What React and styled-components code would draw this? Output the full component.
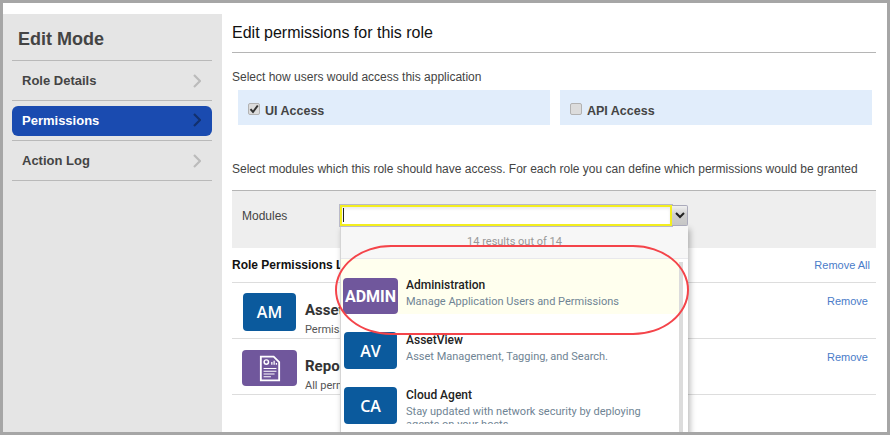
import React from "react";
import styled, { createGlobalStyle } from "styled-components";

const Global = createGlobalStyle`
  html, body { margin: 0; padding: 0; background: #fff; }
  body { font-family: "Liberation Sans", Arial, sans-serif; }
  * { box-sizing: border-box; }
`;

const Frame = styled.div`
  position: relative;
  width: 890px;
  height: 435px;
  border: 3px solid #a6a6a6;
  background: #fff;
  display: flex;
  overflow: hidden;
`;

const Sidebar = styled.aside`
  width: 219px;
  margin-top: 11px;
  padding: 0 10px 0 9px;
  background: #e5e5e5;
  flex: none;
`;

const SideTitle = styled.h2`
  margin: 0;
  height: 47px;
  padding: 15px 0 0 6px;
  font-size: 18px;
  line-height: 20px;
  font-weight: 700;
  color: #444;
  border-bottom: 1px solid #b9b9b9;
`;

const SideRow = styled.div`
  height: 40px;
  padding: ${(p) => (p.$active ? "5px 0 4px" : "0")};
  border-bottom: 1px solid #b9b9b9;
`;

const SideLink = styled.div`
  height: 100%;
  display: flex;
  align-items: center;
  justify-content: space-between;
  padding: ${(p) => (p.$active ? "0 11px 2px 10px" : "0 11px 0 10px")};
  border-radius: 6px;
  font-size: 13px;
  font-weight: 700;
  color: ${(p) => (p.$active ? "#fff" : "#444")};
  background: ${(p) => (p.$active ? "#1a4bb0" : "transparent")};
`;

const Chevron = styled.svg`
  width: 8px;
  height: 14px;
  fill: none;
  stroke-width: 2.2;
  stroke: ${(p) => (p.$active ? "#12306e" : "#bbb")};
`;

const Main = styled.main`
  flex: 1;
  min-width: 0;
  padding: 0 11px 0 10px;
`;

const Heading = styled.h1`
  margin: 0;
  height: 50px;
  padding-top: 20px;
  font-size: 16px;
  line-height: 19px;
  font-weight: 400;
  color: #111;
  border-bottom: 1px solid #b5b5b5;
`;

const Hint = styled.p`
  margin: ${(p) => p.$margin};
  font-size: 12px;
  line-height: 14px;
  color: #444;
`;

const AccessRow = styled.div`
  display: flex;
  gap: 10px;
  margin: 6px 4px 0 6px;
`;

const AccessCard = styled.label`
  flex: 1;
  height: 35px;
  display: flex;
  align-items: center;
  gap: 5px;
  padding: 7px 0 0 10px;
  background: #e1edfb;
  font-size: 12.5px;
  font-weight: 700;
  color: #444;
`;

const Check = styled.span`
  width: 12px;
  height: 12px;
  margin-top: -5px;
  display: flex;
  align-items: center;
  justify-content: center;
  border: 1px solid #b2b2b2;
  border-radius: 2px;
  background: #dcdcdc;
`;

const ModulesBar = styled.div`
  height: 58px;
  margin-top: 14px;
  padding: 16px 0 0 10px;
  background: #eee;
  border-top: 1px solid #b5b5b5;
  font-size: 12px;
  line-height: 19px;
  color: #444;
`;

const ListHeader = styled.div`
  height: 35px;
  display: flex;
  align-items: center;
  justify-content: space-between;
  padding: 0 6px 1px 0;
  border-bottom: 1px solid #ddd;
  font-size: 12px;
  font-weight: 700;
  color: #111;
`;

const RemoveLink = styled.a`
  font-size: 11px;
  font-weight: 400;
  color: #4a7cc9;
`;

const RoleRow = styled.div`
  height: 56px;
  display: flex;
  padding: ${(p) => p.$pad};
  border-bottom: 1px solid #ddd;
`;

const Tile = styled.div`
  flex: none;
  width: ${(p) => p.$w || 53}px;
  height: ${(p) => p.$h || 37}px;
  display: flex;
  align-items: center;
  justify-content: center;
  border-radius: 4px;
  background: ${(p) => (p.$purple ? "#70579c" : "#0b5a9d")};
  color: #fff;
  font-family: ${(p) => (p.$badge ? '"Roboto"' : '"Open Sans"')}, sans-serif;
  font-size: 16px;
  font-weight: ${(p) => (p.$badge ? 700 : 600)};
`;

const RoleText = styled.div`
  flex: 1;
  padding: ${(p) => p.$pad};
  margin-left: ${(p) => p.$left}px;
  font-family: "Roboto", sans-serif;
`;

const RoleName = styled.div`
  font-size: 15px;
  line-height: 18px;
  font-weight: 700;
  color: #333;
`;

const RoleSub = styled.div`
  margin-top: 4px;
  font-size: 11px;
  line-height: 13px;
  color: #555;
`;

const RoleRemove = styled(RemoveLink)`
  margin: 0 8px 0 0;
  padding-top: ${(p) => p.$top}px;
`;

const Dropdown = styled.div`
  position: absolute;
  left: 337px;
  top: 202px;
  width: 348px;
  height: 230px;
  font-family: "Roboto", sans-serif;
`;

const InputRow = styled.div`
  height: 21px;
  display: flex;
`;

const SearchBox = styled.div`
  width: 332px;
  padding: 1px 0 0 1px;
  border: 2px solid #f3ee1f;
  outline: 1px solid #b9b9c9;
  background: #fff;
  box-shadow: inset 0 2px 3px rgba(0, 0, 0, 0.08);
`;

const Caret = styled.span`
  display: block;
  width: 1px;
  height: 14px;
  background: #222;
`;

const ToggleButton = styled.div`
  width: 16px;
  display: flex;
  align-items: center;
  justify-content: center;
  background: linear-gradient(#f0f0f0, #cfcfcf 45%, #c6c6c6);
  border: 1px solid #aab;
  border-left: none;
  border-radius: 0 2px 2px 0;
`;

const Panel = styled.div`
  width: 348px;
  height: 209px;
  background: #fff;
  border-left: 1px solid #d5d5d5;
  box-shadow: 2px 3px 6px rgba(0, 0, 0, 0.28);
`;

const ResultsCount = styled.div`
  height: 33px;
  padding-top: 9px;
  text-align: center;
  font-size: 11px;
  line-height: 14px;
  color: #999;
  background: #f7f7f7;
  border-bottom: 1px solid #e8e8ec;
`;

const ScrollArea = styled.div`
  display: flex;
  height: 176px;
  padding-right: 5px;
`;

const Options = styled.div`
  flex: 1;
  min-width: 0;
  height: 165px;
  overflow: hidden;
`;

const Track = styled.div`
  width: 4px;
  margin-top: 3px;
  background: #dcdcdc;
`;

const Option = styled.div`
  height: 55px;
  display: flex;
  padding: ${(p) => p.$pad};
  background: ${(p) => (p.$hover ? "#ffffee" : "#fff")};
`;

const OptionText = styled.div`
  max-width: 250px;
  margin-left: ${(p) => p.$left}px;
  padding-top: ${(p) => p.$top}px;
`;

const OptionName = styled.div`
  font-size: 12px;
  line-height: 14px;
  font-weight: 500;
  color: #222;
`;

const OptionSub = styled.div`
  margin-top: 3px;
  font-size: 11px;
  line-height: 13px;
  color: #6f8494;
`;

const Callout = styled.div`
  position: absolute;
  left: 332px;
  top: 242px;
  width: 354px;
  height: 90px;
  border: 2.5px solid #f4444a;
  border-radius: 56px / 45px;
  pointer-events: none;
`;

const Tick = () => (
  <svg width="10" height="10" viewBox="0 0 10 10">
    <path d="M1.5 5.2 L4 8 L8.8 1.5" fill="none" stroke="#333" strokeWidth="2" />
  </svg>
);

const Arrow = ({ active }) => (
  <Chevron $active={active} viewBox="0 0 8 14">
    <path d="M1 1 L7 7 L1 13" />
  </Chevron>
);

const ReportIcon = () => (
  <svg width="22" height="27" viewBox="0 0 24 28">
    <path d="M2 1 H16 L22 7 V27 H2 Z" fill="none" stroke="#fff" strokeWidth="2" />
    <circle cx="8" cy="7" r="2.4" fill="none" stroke="#fff" strokeWidth="1.6" />
    <path d="M14 10 V7 M16.5 10 V5.5 M19 10 V8" stroke="#fff" strokeWidth="1.4" />
    <path d="M5 14 H19 M5 17 H19 M5 20 H17 M5 23 H13" stroke="#fff" strokeWidth="1.2" />
  </svg>
);

export default function App() {
  return (
    <>
      <Global />
      <Frame>
        <Sidebar>
          <SideTitle>Edit Mode</SideTitle>
          <SideRow>
            <SideLink>Role Details<Arrow /></SideLink>
          </SideRow>
          <SideRow $active>
            <SideLink $active>Permissions<Arrow active /></SideLink>
          </SideRow>
          <SideRow>
            <SideLink>Action Log<Arrow /></SideLink>
          </SideRow>
        </Sidebar>
        <Main>
          <Heading>Edit permissions for this role</Heading>
          <Hint $margin="17px 0 0">Select how users would access this application</Hint>
          <AccessRow>
            <AccessCard><Check><Tick /></Check>UI Access</AccessCard>
            <AccessCard><Check />API Access</AccessCard>
          </AccessRow>
          <Hint $margin="37px 0 0">Select modules which this role should have access. For each role you can define which permissions would be granted</Hint>
          <ModulesBar>Modules</ModulesBar>
          <ListHeader>
            Role Permissions List
            <RemoveLink>Remove All</RemoveLink>
          </ListHeader>
          <RoleRow $pad="10px 0 0 11px">
            <Tile $h={38}>AM</Tile>
            <RoleText $left={9} $pad="8px 0 0">
              <RoleName>Asset Management</RoleName>
              <RoleSub>Permissions</RoleSub>
            </RoleText>
            <RoleRemove $top={2}>Remove</RoleRemove>
          </RoleRow>
          <RoleRow $pad="11px 0 0 10px">
            <Tile $purple $w={55} $h={36}><ReportIcon /></Tile>
            <RoleText $left={8} $pad="7px 0 0">
              <RoleName>Reporting</RoleName>
              <RoleSub>All permissions</RoleSub>
            </RoleText>
            <RoleRemove $top={1}>Remove</RoleRemove>
          </RoleRow>
        </Main>
        <Dropdown>
          <InputRow>
            <SearchBox><Caret /></SearchBox>
            <ToggleButton>
              <svg width="10" height="7" viewBox="0 0 10 7">
                <path d="M1 1 L5 5 L9 1" fill="none" stroke="#222" strokeWidth="2" />
              </svg>
            </ToggleButton>
          </InputRow>
          <Panel>
            <ResultsCount>14 results out of 14</ResultsCount>
            <ScrollArea>
              <Options>
                <Option $hover $pad="19px 0 0 2px">
                  <Tile $purple $badge $w={55} $h={36}>ADMIN</Tile>
                  <OptionText $left={8} $top={0}>
                    <OptionName>Administration</OptionName>
                    <OptionSub>Manage Application Users and Permissions</OptionSub>
                  </OptionText>
                </Option>
                <Option $pad="18px 0 0 3px">
                  <Tile>AV</Tile>
                  <OptionText $left={9} $top={1}>
                    <OptionName>AssetView</OptionName>
                    <OptionSub>Asset Management, Tagging, and Search.</OptionSub>
                  </OptionText>
                </Option>
                <Option $pad="18px 0 0 3px">
                  <Tile>CA</Tile>
                  <OptionText $left={9} $top={1}>
                    <OptionName>Cloud Agent</OptionName>
                    <OptionSub>Stay updated with network security by deploying agents on your hosts</OptionSub>
                  </OptionText>
                </Option>
              </Options>
              <Track />
            </ScrollArea>
          </Panel>
        </Dropdown>
        <Callout />
      </Frame>
    </>
  );
}
